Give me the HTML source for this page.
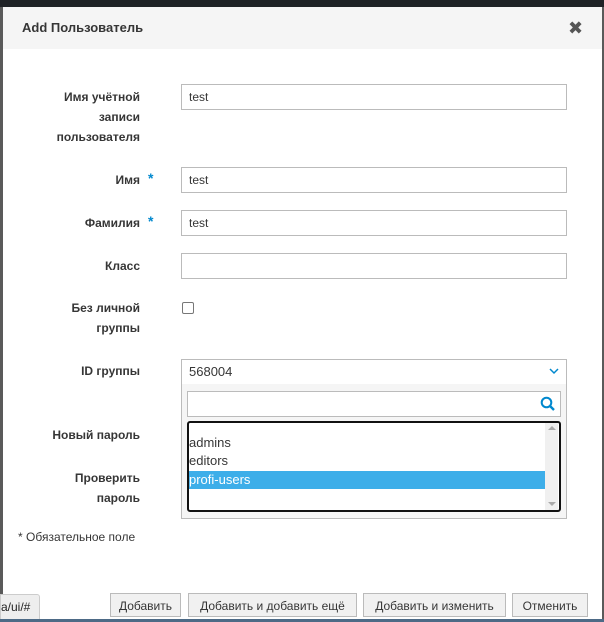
<!DOCTYPE html>
<html><head><meta charset="utf-8"><style>
body{margin:0;width:604px;height:622px;overflow:hidden;background:#5a5a5a;font-family:"Liberation Sans","DejaVu Sans",sans-serif;position:relative}
.a{position:absolute}
.top{left:0;top:0;width:604px;height:7px;background:#1f2226}
.modal{left:3px;top:7px;width:599px;height:615px;background:#fff}
.hdr{left:3px;top:7px;width:599px;height:42px;background:#f5f5f5}
.title{left:22px;top:20px;font-size:13px;font-weight:bold;color:#363636}
.lbl{font-size:12px;color:#363636;text-align:right;width:140px;left:0;line-height:20px;font-weight:bold}
.inp{left:181px;width:384px;height:24px;border:1px solid #bbb;background:#fff;font-size:12px;color:#363636;line-height:24px;text-indent:7px}
.star{color:#0088ce;font-weight:bold;font-size:14px}
.btn{top:593px;height:24px;border:1px solid #bbb;background:#f1f1f1;font-size:12px;color:#363636;line-height:24px;text-align:center;box-sizing:border-box}
</style></head><body>
<div class="a top"></div>
<div class="a modal"></div>
<div class="a hdr"></div>
<div class="a title">Add Пользователь</div>
<div class="a" style="left:568px;top:18px;font-size:18px;font-weight:bold;color:#555">✖</div>

<div class="a lbl" style="top:87px">Имя учётной<br>записи<br>пользователя</div>
<div class="a inp" style="top:84px">test</div>
<div class="a lbl" style="top:170px">Имя<span class="star" style="position:absolute;left:148px;top:-2px">*</span></div>
<div class="a inp" style="top:167px">test</div>
<div class="a lbl" style="top:213px">Фамилия<span class="star" style="position:absolute;left:148px;top:-2px">*</span></div>
<div class="a inp" style="top:210px">test</div>
<div class="a lbl" style="top:256px">Класс</div>
<div class="a inp" style="top:253px"></div>
<div class="a lbl" style="top:298px">Без личной<br>группы</div>
<div class="a" style="left:182px;top:302px;width:10px;height:10px;border:1px solid #777;border-radius:2px;background:#fff"></div>
<div class="a lbl" style="top:361px">ID группы</div>
<div class="a inp" style="top:359px;font-size:13px">568004</div>
<svg class="a" style="left:549px;top:368px" width="10" height="7"><path d="M1 1L5 5L9 1" stroke="#0088ce" stroke-width="1.5" fill="none"/></svg>
<div class="a lbl" style="top:425px">Новый пароль</div>
<div class="a lbl" style="top:468px">Проверить<br>пароль</div>

<div class="a" style="left:181px;top:384px;width:384px;height:134px;border:1px solid #bbb;border-top:none;background:#f5f5f5"></div>
<div class="a" style="left:187px;top:391px;width:372px;height:24px;border:1px solid #bbb;background:#fff"></div>
<svg class="a" style="left:540px;top:396px" width="16" height="16"><circle cx="6.5" cy="6.5" r="4.8" stroke="#0088ce" stroke-width="2" fill="none"/><path d="M10 10L14 14" stroke="#0088ce" stroke-width="2.4"/></svg>
<div class="a" style="left:187px;top:421px;width:370px;height:87px;border:2px solid #111;border-radius:3px;background:#fff"></div>
<div class="a" style="left:545px;top:423px;width:13px;height:87px;background:#f0f0f0"></div>
<div class="a" style="left:548px;top:426px;width:0;height:0;border:4px solid transparent;border-bottom-color:#aaa;border-top:none"></div>
<div class="a" style="left:548px;top:502px;width:0;height:0;border:4px solid transparent;border-top-color:#aaa;border-bottom:none"></div>
<div class="a" style="left:189px;top:434px;font-size:13px;color:#363636;line-height:18px">admins<br>editors</div>
<div class="a" style="left:189px;top:471px;width:356px;height:18px;background:#3daee9;color:#fff;font-size:13px;line-height:18px">profi-users</div>

<div class="a" style="left:18px;top:530px;font-size:12px;color:#363636">* Обязательное поле</div>

<div class="a btn" style="left:110px;width:71px">Добавить</div>
<div class="a btn" style="left:188px;width:169px">Добавить и добавить ещё</div>
<div class="a btn" style="left:363px;width:143px">Добавить и изменить</div>
<div class="a btn" style="left:512px;width:76px">Отменить</div>
<div class="a" style="left:0;top:594px;width:38px;height:26px;background:#eee;border:1px solid #ccc;border-radius:0 3px 0 0;font-size:12px;line-height:24px;color:#222">a/ui/#</div>
<div class="a" style="left:0;top:619px;width:604px;height:3px;background:#4d6a86"></div>
</body></html>
